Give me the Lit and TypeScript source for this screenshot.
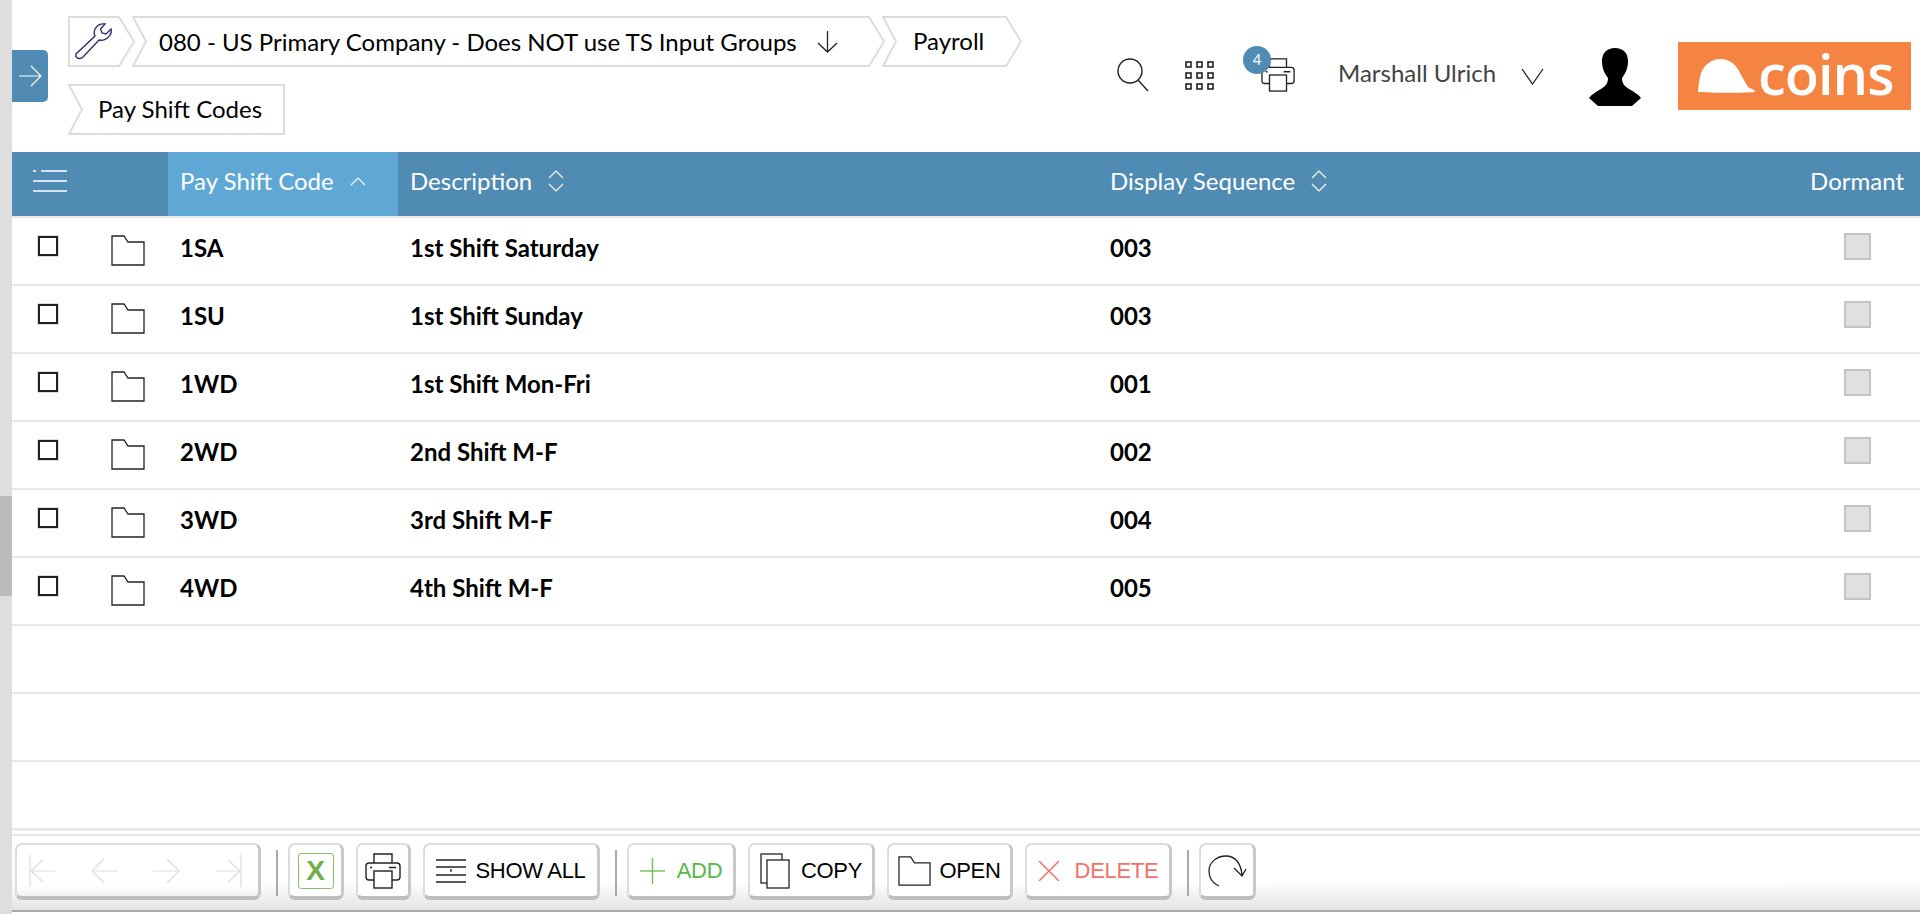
import { LitElement, html, css, svg } from "lit";
import { customElement } from "lit/decorators.js";

const crumbPoly = (w: number, h: number, flatLeft: boolean, flatRight: boolean) => {
  const n = 14;
  const pts = [
    [1, 1],
    [flatRight ? w - 1 : w - n - 2, 1],
    ...(flatRight ? [] : [[w - 1, h / 2]]),
    [flatRight ? w - 1 : w - n - 2, h - 1],
    [1, h - 1],
    ...(flatLeft ? [] : [[n, h / 2]]),
  ];
  return pts.map((p) => p.join(",")).join(" ");
};

const crumbBg = (w: number, h: number, fl = false, fr = false) => html`<svg class="crumb-bg" width=${w} height=${h} viewBox="0 0 ${w} ${h}">
  <polygon points=${crumbPoly(w, h, fl, fr)} fill="#fff" stroke="#dcdcdc" stroke-width="2"></polygon>
</svg>`;

const folder = (w = 34, h = 31) => html`<svg width=${w} height=${h} viewBox="0 0 34 31" fill="#fff" stroke="#222" stroke-width="1.3" preserveAspectRatio="none"><path d="M1 1H13L17 7H33V30H1Z"></path></svg>`;

const printer = (size = 36) => html`<svg width=${size} height=${size} viewBox="0 0 36 36" fill="#fff" stroke="#222" stroke-width="1.4"><path d="M9 10V1H27V10"></path><rect x="1" y="10" width="34" height="17" rx="3"></rect><rect x="9" y="18" width="18" height="17"></rect><path d="M5 14.5h2M24 14.5h7" stroke-width="1.6"></path></svg>`;

const rows = [
  ["1SA", "1st Shift Saturday", "003"],
  ["1SU", "1st Shift Sunday", "003"],
  ["1WD", "1st Shift Mon-Fri", "001"],
  ["2WD", "2nd Shift M-F", "002"],
  ["3WD", "3rd Shift M-F", "004"],
  ["4WD", "4th Shift M-F", "005"],
];

const sortBoth = html`<svg class="sort" width="18" height="24" viewBox="0 0 18 24" fill="none" stroke="#fff" stroke-width="1.2"><path d="M2 9L9 2L16 9M2 15L9 22L16 15"></path></svg>`;

@customElement("app-root")
export class AppRoot extends LitElement {
  static styles = css`
    :host { display: flex; width: 1920px; height: 914px; overflow: hidden; background: #fff; font-family: Lato, sans-serif; color: #000; }
    .scrollbar { width: 12px; flex: none; background: #dedede; padding-top: 496px; box-sizing: border-box; }
    .thumb { height: 100px; background: #bbb; }
    .main { flex: 1; min-width: 0; display: flex; flex-direction: column; }
    .top { height: 152px; flex: none; display: flex; align-items: flex-start; }
    .tab { margin-top: 50px; width: 36px; height: 52px; background: #4f8bb3; border-radius: 0 5px 5px 0; display: flex; align-items: center; justify-content: center; flex: none; }
    .crumbs { margin: 16px 0 0 20px; width: 1000px; display: flex; flex-wrap: wrap; row-gap: 17px; flex: none; }
    .crumb { position: relative; height: 51px; display: flex; align-items: center; font-size: 24px; flex: none; margin-right: -3px; box-sizing: border-box; }
    .crumb-bg { position: absolute; left: 0; top: 0; }
    .crumb > span, .crumb > .ico { position: relative; }
    .wrench { width: 67px; }
    .wrench .ico { margin-left: 7px; display: flex; }
    .company { width: 753px; padding-left: 27px; }
    .company svg.down { position: relative; margin-left: 19px; }
    .payroll { width: 140px; padding: 0 0 2px 31px; }
    .psc { width: 217px; padding: 0 0 3px 30px; }
    .tools { flex: 1; display: flex; align-items: flex-start; }
    .search { margin: 58px 0 0 49px; }
    .grid9 { margin: 61px 0 0 36px; }
    .print { position: relative; margin: 58px 0 0 46px; width: 34px; height: 34px; display: flex; }
    .badge { position: absolute; left: -18px; top: -12px; width: 28px; height: 28px; border-radius: 50%; background: #4f8bb3; color: #fff; font-size: 15px; display: flex; align-items: center; justify-content: center; padding-bottom: 3px; box-sizing: border-box; }
    .user { margin: 58px 0 0 43px; font-size: 24px; color: #444; width: 183px; }
    .chev { margin: 68px 0 0 0; }
    .person { margin: 48px 0 0 45px; }
    .logo { margin: 42px 0 0 37px; width: 233px; height: 68px; background: #f58442; display: flex; align-items: center; padding-left: 20px; box-sizing: border-box; color: #fff; gap: 3px; }
    .logo b { font-family: "Open Sans", sans-serif; font-size: 56px; font-weight: 600; letter-spacing: -1px; line-height: 1; margin-top: -7px; }

    .table { flex: none; height: 678px; }
    .thead { height: 64px; background: #4f8bb3; border-bottom: 2px solid #e8e8e8; display: grid; grid-template-columns: 156px 230px 700px 1fr; color: #fff; font-size: 24px; }
    .th { display: flex; align-items: center; padding: 0 0 7px 12px; gap: 15px; }
    .th.first { padding-left: 21px; }
    .th.active { background: #5fa8d6; }
    .th.dorm { justify-content: space-between; padding-right: 16px; }
    .seq { display: flex; align-items: center; gap: 15px; }
    .tr { height: 66px; border-bottom: 2px solid #e8e8e8; display: grid; grid-template-columns: 156px 230px 700px 1fr; align-items: center; font-size: 24px; font-weight: 700; }
    .sel { display: flex; align-items: center; padding-left: 26px; }
    .box { width: 20px; height: 20px; border: 2px solid #222; box-sizing: border-box; margin-top: -11px; outline: 1px solid #ddd; }
    .sel svg { margin-left: 53px; margin-top: -2px; }
    .cell { padding: 0 0 7px 12px; }
    .last { display: flex; justify-content: space-between; align-items: center; }
    .dormbox { width: 27px; height: 27px; background: #e0e0e0; border: 2px solid #c4c4c4; box-sizing: border-box; margin: 0 49px 2px 0; }

    .footer { height: 78px; flex: none; position: relative; border-top: 2px solid #e8e8e8; box-shadow: 0 -3px 0 #fff, 0 -4px 0 #eee; margin: 4px 0 2px; background: linear-gradient(#fff 60%, #e4e4e4 97%); display: flex; align-items: flex-start; padding: 7px 0 0 3px; box-sizing: border-box; }
    .footer::after { content: ""; position: absolute; left: 0; right: 0; bottom: 0; height: 2px; background: #aaa; }
    .btn { height: 57px; box-sizing: border-box; background: #fff; border: 2px solid #dcdcdc; border-bottom: 4px solid #bdbdbd; border-right: 3px solid #c8c8c8; border-radius: 7px; display: flex; align-items: center; justify-content: center; gap: 10px; font-family: "Liberation Sans", Arial, sans-serif; font-size: 22px; letter-spacing: -0.3px; flex: none; }
    .nav { width: 246px; justify-content: space-between; padding: 0 16px 0 12px; background: linear-gradient(#fff 80%, #f1f1f1); }
    .sep { width: 2px; height: 46px; background: #aaa; margin: 7px 10px 0 15px; flex: none; }
    .gap { width: 12px; flex: none; }
    .xl { width: 36px; height: 36px; border: 1.5px solid #8ec06c; border-radius: 3px; color: #72ad4a; font-weight: 700; font-size: 28px; display: flex; align-items: center; justify-content: center; box-sizing: border-box; }
    .w56 { width: 56px; }
    .w55 { width: 55px; }
    .w57 { width: 57px; }
    .showall { width: 177px; gap: 9px; }
    .add { width: 109px; gap: 12px; color: #58b748; }
    .copy { width: 127px; gap: 11px; }
    .open { width: 126px; gap: 8px; }
    .del { width: 147px; gap: 15px; color: #f2726b; }
  `;

  render() {
    return html`
      <div class="scrollbar"><div class="thumb"></div></div>
      <div class="main">
        <div class="top">
          <div class="tab"><svg width="24" height="24" viewBox="0 0 24 24" fill="none" stroke="#fff" stroke-width="1.2"><path d="M1 12H22M13 2L23 12L13 22"></path></svg></div>
          <div class="crumbs">
            <div class="crumb wrench">${crumbBg(67, 51, true)}<div class="ico"><svg width="38" height="37" viewBox="0 0 38 37" fill="none" stroke="#3c2a6b" stroke-width="1.4"><path d="M1.5 30.5C0 32.5 1 36 5 35.5C6 35.5 7 35 8 34L24 17C28 18 33 16 35 12C36.5 10 36.5 8 36 6L31 11L27 10L25.5 6L30 1C26 0.5 22 2.5 20 6C19 8.5 19 11 20 13Z"></path></svg></div></div>
            <div class="crumb company">${crumbBg(753, 51)}<span>080 - US Primary Company - Does NOT use TS Input Groups</span><svg class="down" width="23" height="24" viewBox="0 0 23 24" fill="none" stroke="#222" stroke-width="1.3"><path d="M11.5 1V22M2 13L11.5 22L21 13"></path></svg></div>
            <div class="crumb payroll">${crumbBg(140, 51)}<span>Payroll</span></div>
            <div class="crumb psc">${crumbBg(217, 51, false, true)}<span>Pay Shift Codes</span></div>
          </div>
          <div class="tools">
            <svg class="search" width="32" height="34" viewBox="0 0 32 34" fill="none" stroke="#222" stroke-width="1.4"><circle cx="13" cy="13" r="12"></circle><path d="M21 22L31 33"></path></svg>
            <svg class="grid9" width="30" height="30" viewBox="0 0 30 30" fill="none" stroke="#222" stroke-width="1.6">
              ${[0, 11, 22].flatMap((y) => [0, 11, 22].map((x) => svg`<rect x=${x + 1} y=${y + 1} width="5" height="5"></rect>`))}
            </svg>
            <div class="print">${printer(34)}<div class="badge">4</div></div>
            <div class="user">Marshall Ulrich</div>
            <svg class="chev" width="23" height="17" viewBox="0 0 23 17" fill="none" stroke="#222" stroke-width="1.3"><path d="M1 1L11.5 16L22 1"></path></svg>
            <svg class="person" width="52" height="58" viewBox="0 0 52 58" fill="#000"><path d="M26 0C18 0 13 5 13 13C13 21 16 26 19 30C19 35 17 38 12 41C7 44 3 46 0 50L9 58H43L52 50C49 46 45 44 40 41C35 38 33 35 33 30C36 26 39 21 39 13C39 5 34 0 26 0Z"></path></svg>
            <div class="logo">
              <svg width="57" height="34" viewBox="0 0 57 34" fill="#fff"><path d="M0 33C0 31 1 24 2 18C4 7 13 0 22 0C32 0 39 6 43 16L50 28C53 30 57 30 57 33C45 34 15 34 0 33Z"></path></svg>
              <b>coins</b>
            </div>
          </div>
        </div>
        <div class="table">
          <div class="thead">
            <div class="th first"><svg width="34" height="22" viewBox="0 0 34 22" fill="none" stroke="#fff" stroke-width="1.3"><path d="M0 1h3M8 1H34M0 11H34M0 21H34"></path></svg></div>
            <div class="th active">Pay Shift Code <svg width="18" height="10" viewBox="0 0 18 10" fill="none" stroke="#fff" stroke-width="1.2"><path d="M2 9L9 2L16 9"></path></svg></div>
            <div class="th">Description ${sortBoth}</div>
            <div class="th dorm"><span class="seq">Display Sequence ${sortBoth}</span><span>Dormant</span></div>
          </div>
          ${rows.map(
            (r) => html`<div class="tr">
              <div class="sel"><div class="box"></div>${folder()}</div>
              <div class="cell">${r[0]}</div>
              <div class="cell">${r[1]}</div>
              <div class="cell last"><span>${r[2]}</span><div class="dormbox"></div></div>
            </div>`
          )}
          ${[0, 1, 2].map(() => html`<div class="tr"></div>`)}
        </div>
        <div class="footer">
          <div class="btn nav">
            <svg width="26" height="32" viewBox="0 0 26 32" fill="none" stroke="#ddd" stroke-width="1.2"><path d="M1 0V32M26 16H2M14 5L2 16L14 27"></path></svg>
            <svg width="28" height="26" viewBox="0 0 28 26" fill="none" stroke="#ddd" stroke-width="1.2"><path d="M28 13H2M14 1L2 13L14 25"></path></svg>
            <svg width="28" height="26" viewBox="0 0 28 26" fill="none" stroke="#ddd" stroke-width="1.2"><path d="M0 13H26M14 1L26 13L14 25"></path></svg>
            <svg width="26" height="32" viewBox="0 0 26 32" fill="none" stroke="#ddd" stroke-width="1.2"><path d="M25 0V32M0 16H24M12 5L24 16L12 27"></path></svg>
          </div>
          <div class="sep"></div>
          <div class="btn w56"><div class="xl">X</div></div>
          <div class="gap"></div>
          <div class="btn w55">${printer(36)}</div>
          <div class="gap"></div>
          <div class="btn showall"><svg width="30" height="24" viewBox="0 0 30 24" fill="none" stroke="#222" stroke-width="1.3"><path d="M0 1H30M0 8H30M0 16H30M0 23H30M15 10V13"></path></svg>SHOW ALL</div>
          <div class="sep"></div>
          <div class="btn add"><svg width="25" height="26" viewBox="0 0 25 26" fill="none" stroke="#79c35f" stroke-width="1.5"><path d="M12.5 0V26M0 13H25"></path></svg>ADD</div>
          <div class="gap"></div>
          <div class="btn copy"><svg width="30" height="36" viewBox="0 0 30 36" fill="#fff" stroke="#222" stroke-width="1.3"><rect x="1" y="1" width="21" height="29"></rect><rect x="7" y="7" width="22" height="28"></rect></svg>COPY</div>
          <div class="gap"></div>
          <div class="btn open">${folder(33, 30)}OPEN</div>
          <div class="gap"></div>
          <div class="btn del"><svg width="22" height="20" viewBox="0 0 22 20" fill="none" stroke="#f2726b" stroke-width="1.5"><path d="M1 0L21 20M21 0L1 20"></path></svg>DELETE</div>
          <div class="sep"></div>
          <div class="btn w57"><svg width="39" height="32" viewBox="0 0 39 32" fill="none" stroke="#222" stroke-width="1.3"><path d="M11 31C4 28 1 22 1 16C1 7 9 1 18 1C27 1 33 8 34 20M26 13L34 21L38 14"></path></svg></div>
        </div>
      </div>
    `;
  }
}
